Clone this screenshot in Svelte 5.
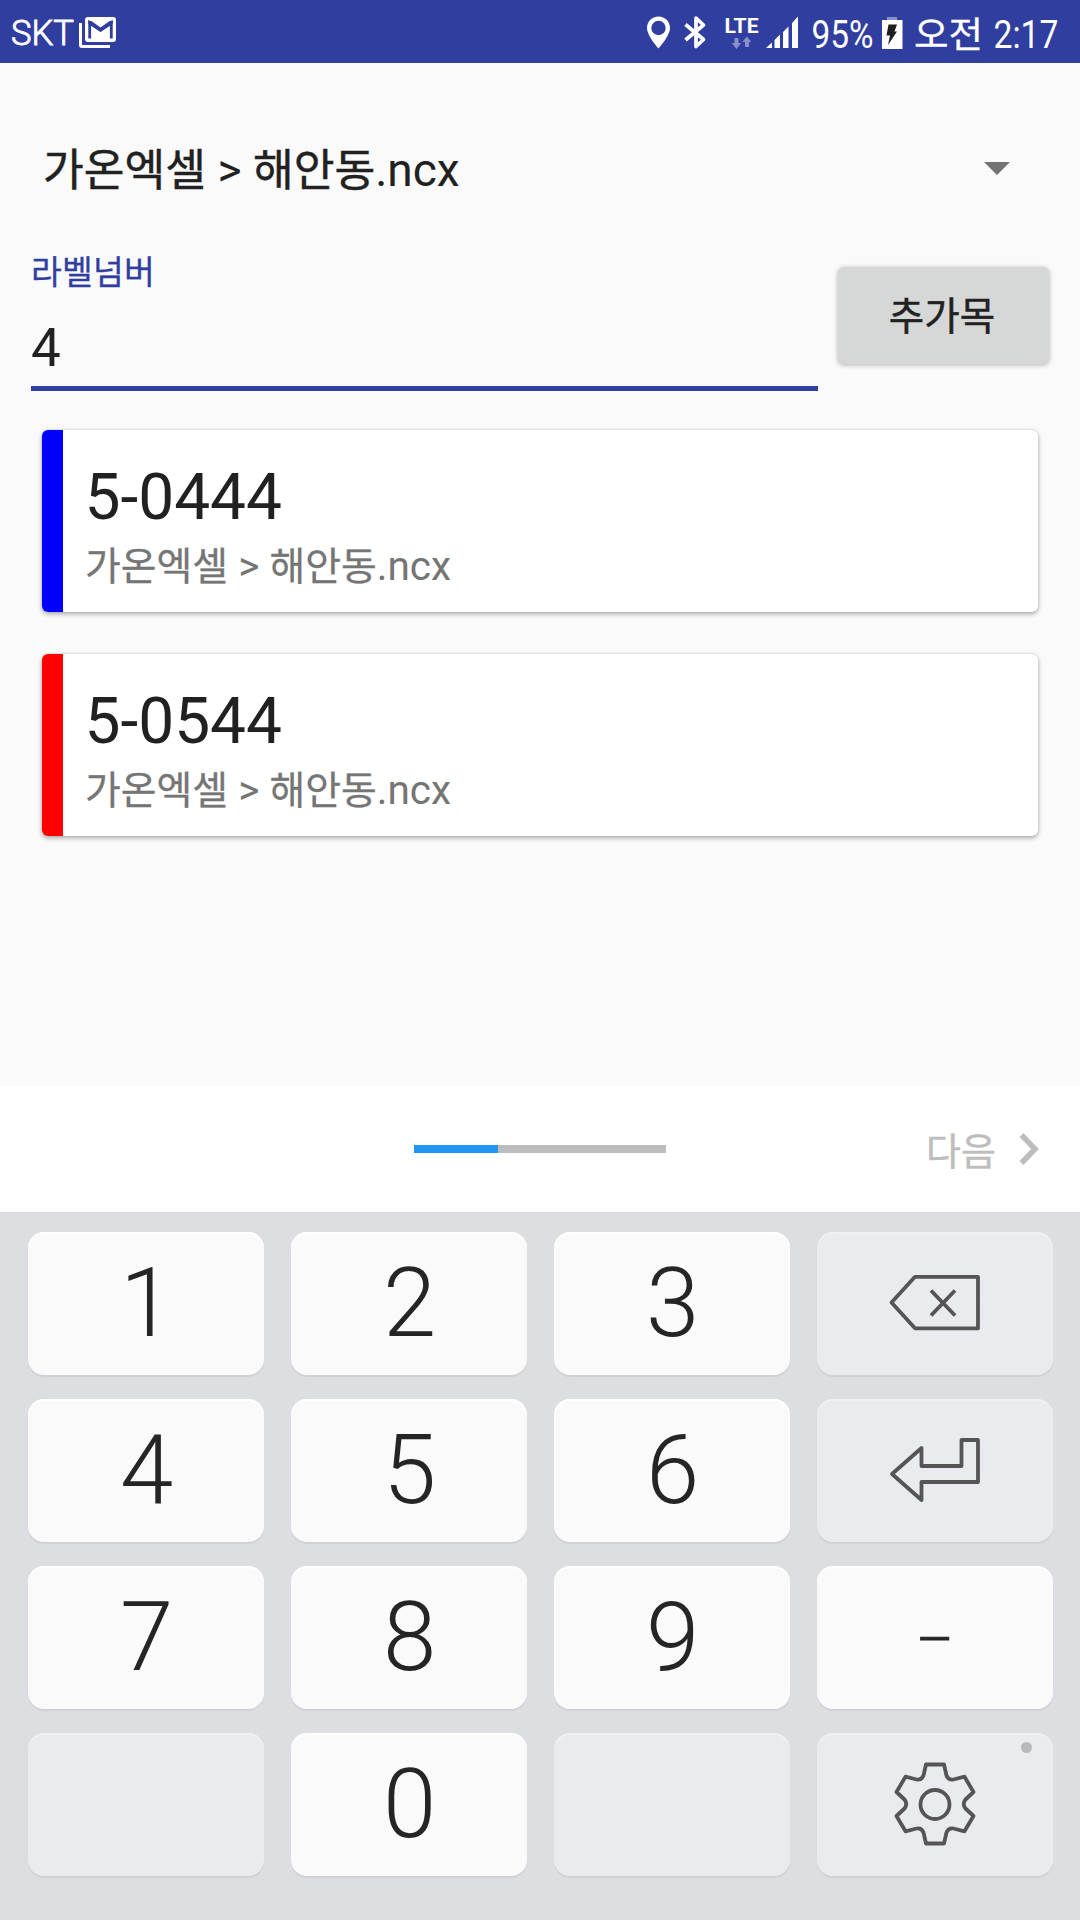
<script>
  const file = '가온엑셀 > 해안동.ncx';

  const results = [
    { label: '5-0444', tone: 'blue' },
    { label: '5-0544', tone: 'red' }
  ];

  const keys = ['1', '2', '3', 'delete', '4', '5', '6', 'enter', '7', '8', '9', '–', '', '0', ' ', 'settings'];
  const isSoft = (k) => k.length > 1 || k.trim() === '';

  // Splits a string into Hangul and Latin runs so each is set in its own size.
  const runs = (text) => text.match(/[가-힣]+|[^가-힣]+/g).map((t) => ({ t, ko: /[가-힣]/.test(t) }));
</script>

{#snippet mixed(text)}{#each runs(text) as r}<span class:ko={r.ko}>{r.t}</span>{/each}{/snippet}

<div class="screen">
  <header class="status">
    <div class="side">
      <svg width="64" height="63" viewBox="12 0 64 63">
        <text class="thin" x="11" y="44.5" font-size="35" textLength="63" lengthAdjust="spacingAndGlyphs">SKT</text>
      </svg>
      <svg width="40" height="63" viewBox="78 0 40 63">
        <path d="M80.5 23v22q0 1.500 1.500 1.500h28" fill="none" stroke="#fff" stroke-width="3" />
        <rect x="85" y="17" width="31" height="25" rx="3" fill="#fff" />
        <path d="M89.700 38.500V22.500L100.500 30L111.300 22.500V38.500" fill="none" stroke="#303e9f" stroke-width="2.800" />
        <path d="M88.300 21h3l9.200 6.500l9.200-6.500h3v3l-12.200 8l-12.200-8z" fill="#303e9f" />
      </svg>
    </div>
    <div class="side">
      <svg width="38" height="63" viewBox="640 0 38 63">
        <path fill="#fff" fill-rule="evenodd" d="M658.500 16.500c-6.500 0-11.500 5-11.500 11.500c0 8 11.500 20.500 11.500 20.500s11.500-12.500 11.500-20.500c0-6.500-5-11.500-11.500-11.500zm0 4.300a7.200 7.200 0 1 1 0 14.400a7.200 7.200 0 1 1 0-14.400z" />
      </svg>
      <svg width="42" height="63" viewBox="678 0 42 63">
        <path d="M685.500 24.500l18 15l-7.500 7V18l7.500 7L685.500 40" fill="none" stroke="#fff" stroke-width="3.700" stroke-linejoin="round" />
      </svg>
      <svg width="42" height="63" viewBox="720 0 42 63">
        <text class="lte" x="724.500" y="32.500" font-size="20" textLength="34" lengthAdjust="spacingAndGlyphs">LTE</text>
        <path fill="#8790ca" d="M734.500 38h4v5h2.700l-4.700 6l-4.700-6h2.700zM745 47h4v-5h2.300l-4.500-5.500l-4.500 5.500h2.700z" />
      </svg>
      <svg width="46" height="63" viewBox="762 0 46 63">
        <path fill="#fff" d="M766 48l6-5.500v5.500zM774.500 40l5.500-5.500v13.500h-5.500zM783 32l5.500-5.500v21.500h-5.500zM792 23l6-6.500v31.500h-6z" />
      </svg>
      <svg width="70" height="63" viewBox="808 0 70 63">
        <text class="text" x="811.500" y="48" font-size="39" textLength="62" lengthAdjust="spacingAndGlyphs">95%</text>
      </svg>
      <svg width="30" height="63" viewBox="878 0 30 63">
        <path fill="#8790ca" d="M887 17h10v3h-10z" />
        <path fill="#fff" d="M882 20h20.500v29h-20.500z" />
        <path fill="#1d1d1d" d="M888.500 24.500h8.500l-2.500 7h2.500l-9 13.500l2-9.500h-3.500z" />
      </svg>
      <svg width="160" height="63" viewBox="908 0 160 63">
        <text class="kotext" x="914" y="47.500" font-size="36" textLength="69" lengthAdjust="spacingAndGlyphs">오전</text>
        <text class="text" x="993.500" y="48" font-size="39" textLength="65" lengthAdjust="spacingAndGlyphs">2:17</text>
      </svg>
    </div>
  </header>

  <main>
    <div class="picker">
      <span class="line">{@render mixed(file)}</span>
      <svg width="26" height="13" viewBox="0 0 26 13"><path d="M0 0h26L13 13z" fill="#737373" /></svg>
    </div>

    <div class="form">
      <div class="field">
        <span class="caption">라벨넘버</span>
        <span class="value">4</span>
      </div>
      <button class="add">추가목</button>
    </div>

    <ul class="cards">
      {#each results as r}
        <li class="card">
          <i class={r.tone}></i>
          <div class="body">
            <strong>{r.label}</strong>
            <span class="sub">{@render mixed(file)}</span>
          </div>
        </li>
      {/each}
    </ul>
  </main>

  <nav class="stepper">
    <div class="progress"><i></i></div>
    <div class="next">
      <span>다음</span>
      <svg width="22" height="34" viewBox="0 0 22 34"><path d="M3.500 3L17 17L3.500 31" fill="none" stroke="#bdbdbd" stroke-width="5.500" /></svg>
    </div>
  </nav>

  <section class="keypad">
    {#each keys as k}
      <div class="key" class:soft={isSoft(k)} class:dash={k === '–'}>
        {#if k === 'delete'}
          <svg width="100" height="80" viewBox="885 1264 100 80">
            <path d="M891.500 1302.500L915 1276.800h63v51.500H915z" />
            <path d="M931 1290.500l24 25m0-25l-24 25" />
          </svg>
        {:else if k === 'enter'}
          <svg width="100" height="80" viewBox="885 1431 100 80">
            <path d="M892 1474L921.500 1448v18h40V1440h16.500v42h-56.500v18z" />
          </svg>
        {:else if k === 'settings'}
          <svg width="100" height="100" viewBox="885 1754.500 100 100">
            <path d="M926 1764h18l2.500 11q2 5 7 4l11-2.800l9 15.300l-8 7.500q-3.500 4.500 0 9l8 7.500l-9 15.300l-11-2.800q-5-1-7 4l-2.500 11h-18l-2.500-11q-2-5-7-4l-11 2.800l-9-15.300l8-7.500q3.500-4.500 0-9l-8-7.500l9-15.300l11 2.800q5 1 7-4z" />
            <circle cx="935" cy="1804" r="14.500" />
          </svg>
          <b class="dot"></b>
        {:else}
          <span class="glyph">{k}</span>
        {/if}
      </div>
    {/each}
  </section>
</div>

<style>
  :global(body) { margin: 0; }
  .screen {
    width: 1080px;
    height: 1920px;
    display: flex;
    flex-direction: column;
    background: #fafafa;
    color: #212121;
    font-family: Roboto, 'Noto Sans CJK KR', sans-serif;
    overflow: hidden;
  }
  svg { display: block; flex: none; overflow: visible; }

  .status {
    height: 63px;
    flex: none;
    box-sizing: border-box;
    padding: 0 12px;
    display: flex;
    justify-content: space-between;
    background: #303e9f;
  }
  .side { display: flex; gap: 0; }
  .side:first-child { gap: 2px; }
  .status text { fill: #fff; font-family: Roboto, sans-serif; }
  .status .thin { font-weight: 300; stroke: #fff; stroke-width: 0.900px; }
  .status .lte { font-weight: 700; }
  .status .kotext { font-family: 'Noto Sans CJK KR', sans-serif; font-weight: 400; stroke: #fff; stroke-width: 0.300px; }

  main { flex: none; height: 1023px; }

  .picker {
    height: 64px;
    margin: 73px 70px 0 43px;
    display: flex;
    align-items: center;
    justify-content: space-between;
    font-size: 46px;
  }
  .line, .sub { white-space: pre; line-height: 1; }
  .line { padding-top: 4px; }
  .line :global(.ko) { font-size: 44.300px; -webkit-text-stroke: 0.500px; }

  .form {
    height: 191px;
    padding: 0 31px 0 31px;
    display: flex;
    justify-content: space-between;
  }
  .field {
    width: 787px;
    height: 191px;
    box-sizing: border-box;
    padding-top: 54px;
    border-bottom: 5px solid #303f9f;
    display: flex;
    flex-direction: column;
  }
  .caption { font-size: 33.500px; line-height: 38px; color: #303f9f; letter-spacing: 0.200px; -webkit-text-stroke: 0.300px; }
  .value { font-size: 53px; line-height: 60px; margin-top: 26px; }
  .add {
    width: 211px;
    height: 96.500px;
    margin: 67px 0 0;
    padding: 0 3px 3px 0;
    border: 0;
    border-radius: 6px;
    background: #d6d8d7;
    box-shadow: 0 1px 5px rgba(0, 0, 0, 0.300);
    font: 400 38.500px/93px 'Noto Sans CJK KR', sans-serif;
    -webkit-text-stroke: 0.500px;
    color: #212121;
  }

  .cards {
    list-style: none;
    margin: 39px 42px 0;
    padding: 0;
    display: grid;
    gap: 42px;
  }
  .card {
    height: 182px;
    display: flex;
    background: #fff;
    border-radius: 6px;
    box-shadow: 0 2px 5px rgba(0, 0, 0, 0.320), 0 0 2px rgba(0, 0, 0, 0.150);
  }
  .card i { width: 21px; border-radius: 6px 0 0 6px; }
  .blue { background: #0000ff; }
  .red { background: #ff0000; }
  .body { padding: 30px 0 0 22px; display: flex; flex-direction: column; }
  .body strong { font-weight: 400; font-size: 64px; line-height: 75px; margin-left: -0.500px; }
  .sub { font-size: 40.500px; color: #757575; margin-top: 11px; }
  .sub :global(.ko) { font-size: 38.900px; -webkit-text-stroke: 0.300px; }

  .stepper {
    height: 126px;
    flex: none;
    display: grid;
    grid-template-columns: 1fr 252px 1fr;
    align-items: center;
    background: #fff;
  }
  .progress { grid-column: 2; height: 8px; background: #bdbdbd; display: flex; }
  .progress i { width: 84px; background: #2196f3; }
  .next {
    grid-column: 3;
    display: flex;
    justify-content: flex-end;
    align-items: center;
    gap: 22px;
    padding-right: 40px;
    color: #bdbdbd;
    font-size: 38px;
    -webkit-text-stroke: 0.400px;
  }
  .next span { padding-bottom: 2px; }

  .keypad {
    flex: 1;
    padding: 20px 27px 44px 28px;
    display: grid;
    grid-template-columns: repeat(4, 236px);
    grid-template-rows: repeat(4, 143px);
    gap: 24px 27px;
    background: #dddee2;
  }
  .key {
    position: relative;
    display: flex;
    align-items: center;
    justify-content: center;
    border-radius: 16px;
    background: #fafafa;
    box-shadow: inset 0 2px 1px #fff, 0 2px 1px #d0d1d5;
    color: #252525;
    font-size: 96px;
    font-weight: 300;
    line-height: 1;
  }
  .glyph { padding: 0 0 2px 1px; }
  .soft { background: #e9ebee; box-shadow: inset 0 2px 1px #f0f1f3, 0 2px 1px #d0d1d5; }
  .dash { font-size: 58px; -webkit-text-stroke: 0.800px; }
  .dash .glyph { padding: 2px 0 0; }
  .key svg { fill: none; stroke: #555; stroke-width: 3.800; stroke-linejoin: round; }
  .dot {
    position: absolute;
    top: 9px;
    right: 21px;
    width: 11px;
    height: 11px;
    border-radius: 50%;
    background: #b8b9bb;
  }
</style>
